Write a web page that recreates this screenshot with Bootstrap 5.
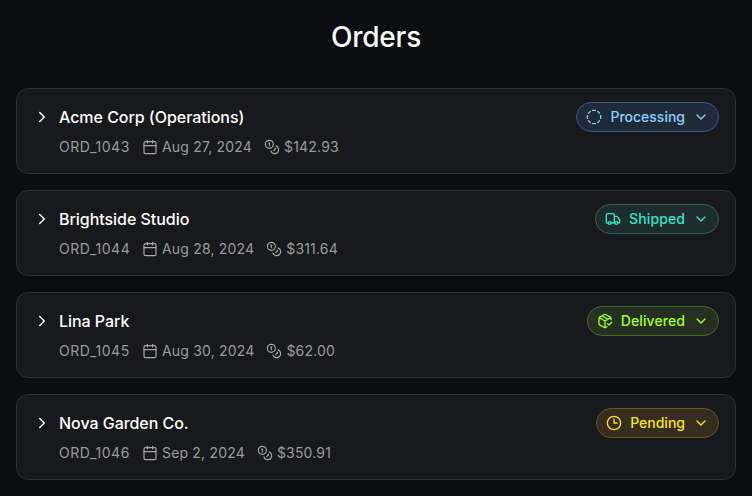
<!DOCTYPE html>
<html lang="en" data-bs-theme="dark">
<head>
<meta charset="utf-8">
<meta name="viewport" content="width=device-width, initial-scale=1">
<title>Orders</title>
<link href="https://cdn.jsdelivr.net/npm/bootstrap@5.3.0/dist/css/bootstrap.min.css" rel="stylesheet">
<style>
body{background:#0c0d11;font-family:Inter,"Liberation Sans",sans-serif;color:#fff;overflow:hidden}
h1{font-size:28px;line-height:42px;font-weight:500;margin:16px 0 30px;letter-spacing:-.2px}
.order{height:86px;background:#18191c;border:1px solid #2e3035;border-radius:12px;padding:13px 16px 0}
.order-name{font-size:16px;line-height:24px;font-weight:500;letter-spacing:-.04px}
.meta{font-size:14px;line-height:20px;color:#9b9b9b;padding-left:26px;margin-top:5px;letter-spacing:.18px;gap:12px}
.order-id{letter-spacing:.56px;width:71px;white-space:nowrap}
svg{fill:none;stroke:currentColor;stroke-width:2;stroke-linecap:round;stroke-linejoin:round;flex:none;display:block}
.meta svg{stroke-width:1.75;color:#a8a8a8}
.status{height:30px;border:1px solid;border-radius:15px;padding:0 9px;font-size:14px;line-height:20px;font-weight:500}
.processing{color:#8ccfff;background:#202b39;border-color:#385882}
.shipped{color:#2ee6c8;background:#1e2d2b;border-color:#2b6158;letter-spacing:.1px}
.delivered{color:#a8ff14;background:#263022;border-color:#476a26;letter-spacing:.08px}
.pending{color:#ffe600;background:#352d20;border-color:#685322}
</style>
</head>
<body>
<svg width="0" height="0" class="d-none">
<symbol id="right" viewBox="0 0 24 24"><path d="m9 18 6-6-6-6"/></symbol>
<symbol id="down" viewBox="0 0 24 24"><path d="m6 9 6 6 6-6"/></symbol>
<symbol id="calendar" viewBox="0 0 24 24"><path d="M8 2v4M16 2v4M3 10h18"/><rect x="3" y="4" width="18" height="18" rx="2"/></symbol>
<symbol id="coins" viewBox="0 0 24 24"><circle cx="8" cy="8" r="6"/><path d="M18.09 10.37A6 6 0 1 1 10.34 18M7 6h1v4M16.71 13.88l.7.71-2.82 2.82"/></symbol>
<symbol id="dashed" viewBox="0 0 24 24"><path d="M10.1 2.182a10 10 0 0 1 3.8 0M13.9 21.818a10 10 0 0 1-3.8 0M17.609 3.721a10 10 0 0 1 2.69 2.7M2.182 13.9a10 10 0 0 1 0-3.8M20.279 17.609a10 10 0 0 1-2.7 2.69M21.818 10.1a10 10 0 0 1 0 3.8M3.721 6.391a10 10 0 0 1 2.7-2.69M6.391 20.279a10 10 0 0 1-2.69-2.7"/></symbol>
<symbol id="truck" viewBox="0 0 24 24"><path d="M14 18V6a2 2 0 0 0-2-2H4a2 2 0 0 0-2 2v11a1 1 0 0 0 1 1h2M15 18H9M19 18h2a1 1 0 0 0 1-1v-3.65a1 1 0 0 0-.22-.624l-3.48-4.35A1 1 0 0 0 17.52 8H14"/><circle cx="17" cy="18" r="2"/><circle cx="7" cy="18" r="2"/></symbol>
<symbol id="box" viewBox="0 0 24 24"><path d="m16 16 2 2 4-4M21 10V8a2 2 0 0 0-1-1.73l-7-4a2 2 0 0 0-2 0l-7 4A2 2 0 0 0 3 8v8a2 2 0 0 0 1 1.73l7 4a2 2 0 0 0 2 0l2-1.14M7.5 4.27l9 5.15M3.29 7 12 12l8.71-5M12 22V12"/></symbol>
<symbol id="clock" viewBox="0 0 24 24"><circle cx="12" cy="12" r="10"/><path d="M12 6v6h4.5"/></symbol>
</svg>
<main class="px-3">
<h1 class="text-center">Orders</h1>
<div class="d-flex flex-column gap-3">
<article class="order">
<div class="d-flex justify-content-between align-items-center"><div class="d-flex align-items-center gap-2"><svg width="18" height="18"><use href="#right"/></svg><span class="order-name">Acme Corp (Operations)</span></div><div class="status processing d-flex align-items-center"><svg class="me-2" width="16" height="16"><use href="#dashed"/></svg><span>Processing</span><svg class="ms-2" width="16" height="16"><use href="#down"/></svg></div></div>
<div class="meta d-flex align-items-center"><span class="order-id">ORD_1043</span><span class="d-flex align-items-center gap-1"><svg width="16" height="16"><use href="#calendar"/></svg>Aug 27, 2024</span><span class="d-flex align-items-center gap-1"><svg width="16" height="16"><use href="#coins"/></svg>$142.93</span></div>
</article>
<article class="order">
<div class="d-flex justify-content-between align-items-center"><div class="d-flex align-items-center gap-2"><svg width="18" height="18"><use href="#right"/></svg><span class="order-name">Brightside Studio</span></div><div class="status shipped d-flex align-items-center"><svg class="me-2" width="16" height="16"><use href="#truck"/></svg><span>Shipped</span><svg class="ms-2" width="16" height="16"><use href="#down"/></svg></div></div>
<div class="meta d-flex align-items-center"><span class="order-id">ORD_1044</span><span class="d-flex align-items-center gap-1"><svg width="16" height="16"><use href="#calendar"/></svg>Aug 28, 2024</span><span class="d-flex align-items-center gap-1"><svg width="16" height="16"><use href="#coins"/></svg>$311.64</span></div>
</article>
<article class="order">
<div class="d-flex justify-content-between align-items-center"><div class="d-flex align-items-center gap-2"><svg width="18" height="18"><use href="#right"/></svg><span class="order-name">Lina Park</span></div><div class="status delivered d-flex align-items-center"><svg class="me-2" width="16" height="16"><use href="#box"/></svg><span>Delivered</span><svg class="ms-2" width="16" height="16"><use href="#down"/></svg></div></div>
<div class="meta d-flex align-items-center"><span class="order-id">ORD_1045</span><span class="d-flex align-items-center gap-1"><svg width="16" height="16"><use href="#calendar"/></svg>Aug 30, 2024</span><span class="d-flex align-items-center gap-1"><svg width="16" height="16"><use href="#coins"/></svg>$62.00</span></div>
</article>
<article class="order">
<div class="d-flex justify-content-between align-items-center"><div class="d-flex align-items-center gap-2"><svg width="18" height="18"><use href="#right"/></svg><span class="order-name">Nova Garden Co.</span></div><div class="status pending d-flex align-items-center"><svg class="me-2" width="16" height="16"><use href="#clock"/></svg><span>Pending</span><svg class="ms-2" width="16" height="16"><use href="#down"/></svg></div></div>
<div class="meta d-flex align-items-center"><span class="order-id">ORD_1046</span><span class="d-flex align-items-center gap-1"><svg width="16" height="16"><use href="#calendar"/></svg>Sep 2, 2024</span><span class="d-flex align-items-center gap-1"><svg width="16" height="16"><use href="#coins"/></svg>$350.91</span></div>
</article>
</div>
</main>
<script src="https://cdn.jsdelivr.net/npm/bootstrap@5.3.0/dist/js/bootstrap.bundle.min.js"></script>
</body>
</html>
